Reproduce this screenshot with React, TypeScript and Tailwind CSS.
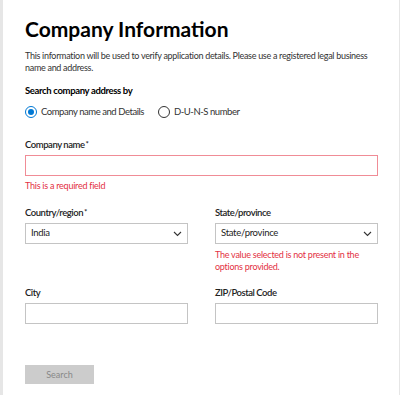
import React from "react";

const font = { fontFamily: 'Lato, "Noto Sans", sans-serif' };

function Label({ text, required }: { text: string; required?: boolean }) {
  return (
    <div className="mb-[4px] text-[9.5px] leading-[12px] font-semibold tracking-[-0.45px] text-[#222]">
      {text}
      {required && <span className="ml-[1px] align-top text-[8px] leading-[10px]">*</span>}
    </div>
  );
}

function Chevron() {
  return (
    <svg width="9" height="6" viewBox="0 0 9 6" fill="none">
      <path d="M1 1l3.5 3.5L8 1" stroke="#333" strokeWidth="1.1" />
    </svg>
  );
}

function Select({ value }: { value: string }) {
  return (
    <div className="flex h-[21px] items-center justify-between border border-[#c4c4c4] bg-white pl-[5px] pr-[5px]">
      <span className="text-[9.5px] tracking-[-0.3px] text-[#222]">{value}</span>
      <Chevron />
    </div>
  );
}

function Radio({ checked, label }: { checked?: boolean; label: string }) {
  return (
    <label className="flex h-[12px] items-center gap-[4px]">
      <span
        className={
          checked
            ? "flex h-[12px] w-[12px] items-center justify-center rounded-full border border-[#0078d4]"
            : "flex h-[12px] w-[12px] items-center justify-center rounded-full border border-[#333]"
        }
      >
        {checked && <span className="h-[6px] w-[6px] rounded-full bg-[#0078d4]" />}
      </span>
      <span className="text-[9.5px] tracking-[-0.45px] text-[#333]">{label}</span>
    </label>
  );
}

export default function App() {
  return (
    <div className="flex h-[395px] w-[400px] overflow-hidden bg-[#e6e6e6] pl-[3px] pr-[1px]" style={font}>
      <div className="flex-1 bg-white pl-[22px] pr-[21px] pt-[17px]">
        <h1 className="text-[21px] leading-[24px] font-bold text-black">Company Information</h1>
        <p className="mt-[9px] text-[9px] leading-[12px] tracking-[-0.3px] text-[#333]">
          This information will be used to verify application details. Please use a registered legal business
          name and address.
        </p>
        <div className="mt-[11px] text-[9.5px] leading-[12px] font-bold tracking-[-0.35px] text-black">
          Search company address by
        </div>
        <div className="mt-[9px] flex items-center gap-[14px]">
          <Radio checked label="Company name and Details" />
          <Radio label="D-U-N-S number" />
        </div>

        <div className="mt-[21px]">
          <Label text="Company name" required />
          <div className="h-[21px] border border-[#f08c96] bg-white" />
          <div className="mt-[4px] text-[9px] leading-[12px] tracking-[-0.25px] text-[#e3303f]">
            This is a required field
          </div>
        </div>

        <div className="mt-[15px] grid grid-cols-2 gap-x-[27px]">
          <div>
            <Label text="Country/region" required />
            <Select value="India" />
          </div>
          <div>
            <Label text="State/province" />
            <Select value="State/province" />
            <div className="mt-[5px] text-[9px] leading-[12px] tracking-[-0.25px] text-[#e3303f]">
              The value selected is not present in the options provided.
            </div>
          </div>
        </div>

        <div className="mt-[14px] grid grid-cols-2 gap-x-[27px]">
          <div>
            <Label text="City" />
            <div className="h-[21px] border border-[#c4c4c4] bg-white" />
          </div>
          <div>
            <Label text="ZIP/Postal Code" />
            <div className="h-[21px] border border-[#c4c4c4] bg-white" />
          </div>
        </div>

        <button className="mt-[41px] flex h-[19px] w-[69px] items-center justify-center bg-[#cccccc] text-[9px] text-[#888]">
          Search
        </button>
      </div>
    </div>
  );
}
